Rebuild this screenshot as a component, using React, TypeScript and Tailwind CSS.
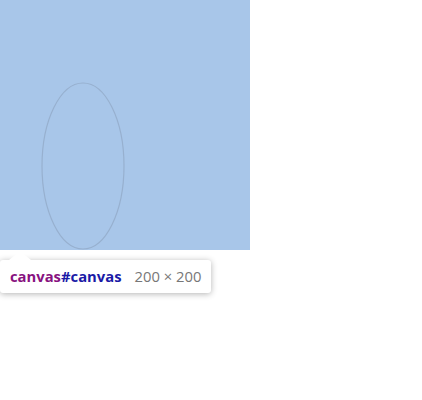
export default function App() {
  return (
    <div className="w-[422px] h-[400px] bg-white" style={{ fontFamily: '"Open Sans", "Noto Sans", sans-serif' }}>
      {/* Canvas */}
      <div className="w-[250px] h-[250px] bg-[#a8c6e9]">
        <svg width="250" height="250" viewBox="0 0 250 250">
          <ellipse cx="83" cy="166" rx="41" ry="83" fill="none" stroke="#97b0cf" strokeWidth="1.2" />
        </svg>
      </div>

      {/* Inspect tooltip */}
      <div className="relative mt-[10px] inline-flex items-center h-[33px] pl-[10px] pr-[10px] bg-white rounded-[3px] shadow-[0_1px_6px_rgba(0,0,0,0.3)]">
        <div className="absolute left-[9px] -top-[9px] w-0 h-0 border-l-[11px] border-r-[11px] border-b-[9px] border-l-transparent border-r-transparent border-b-white" />
        <span className="text-[14.8px] font-bold text-[#881280]">canvas</span>
        <span className="text-[14.8px] font-bold text-[#1a1aa6]">#canvas</span>
        <span className="ml-[13px] text-[14.8px] text-[#777]">200 × 200</span>
      </div>
    </div>
  );
}
